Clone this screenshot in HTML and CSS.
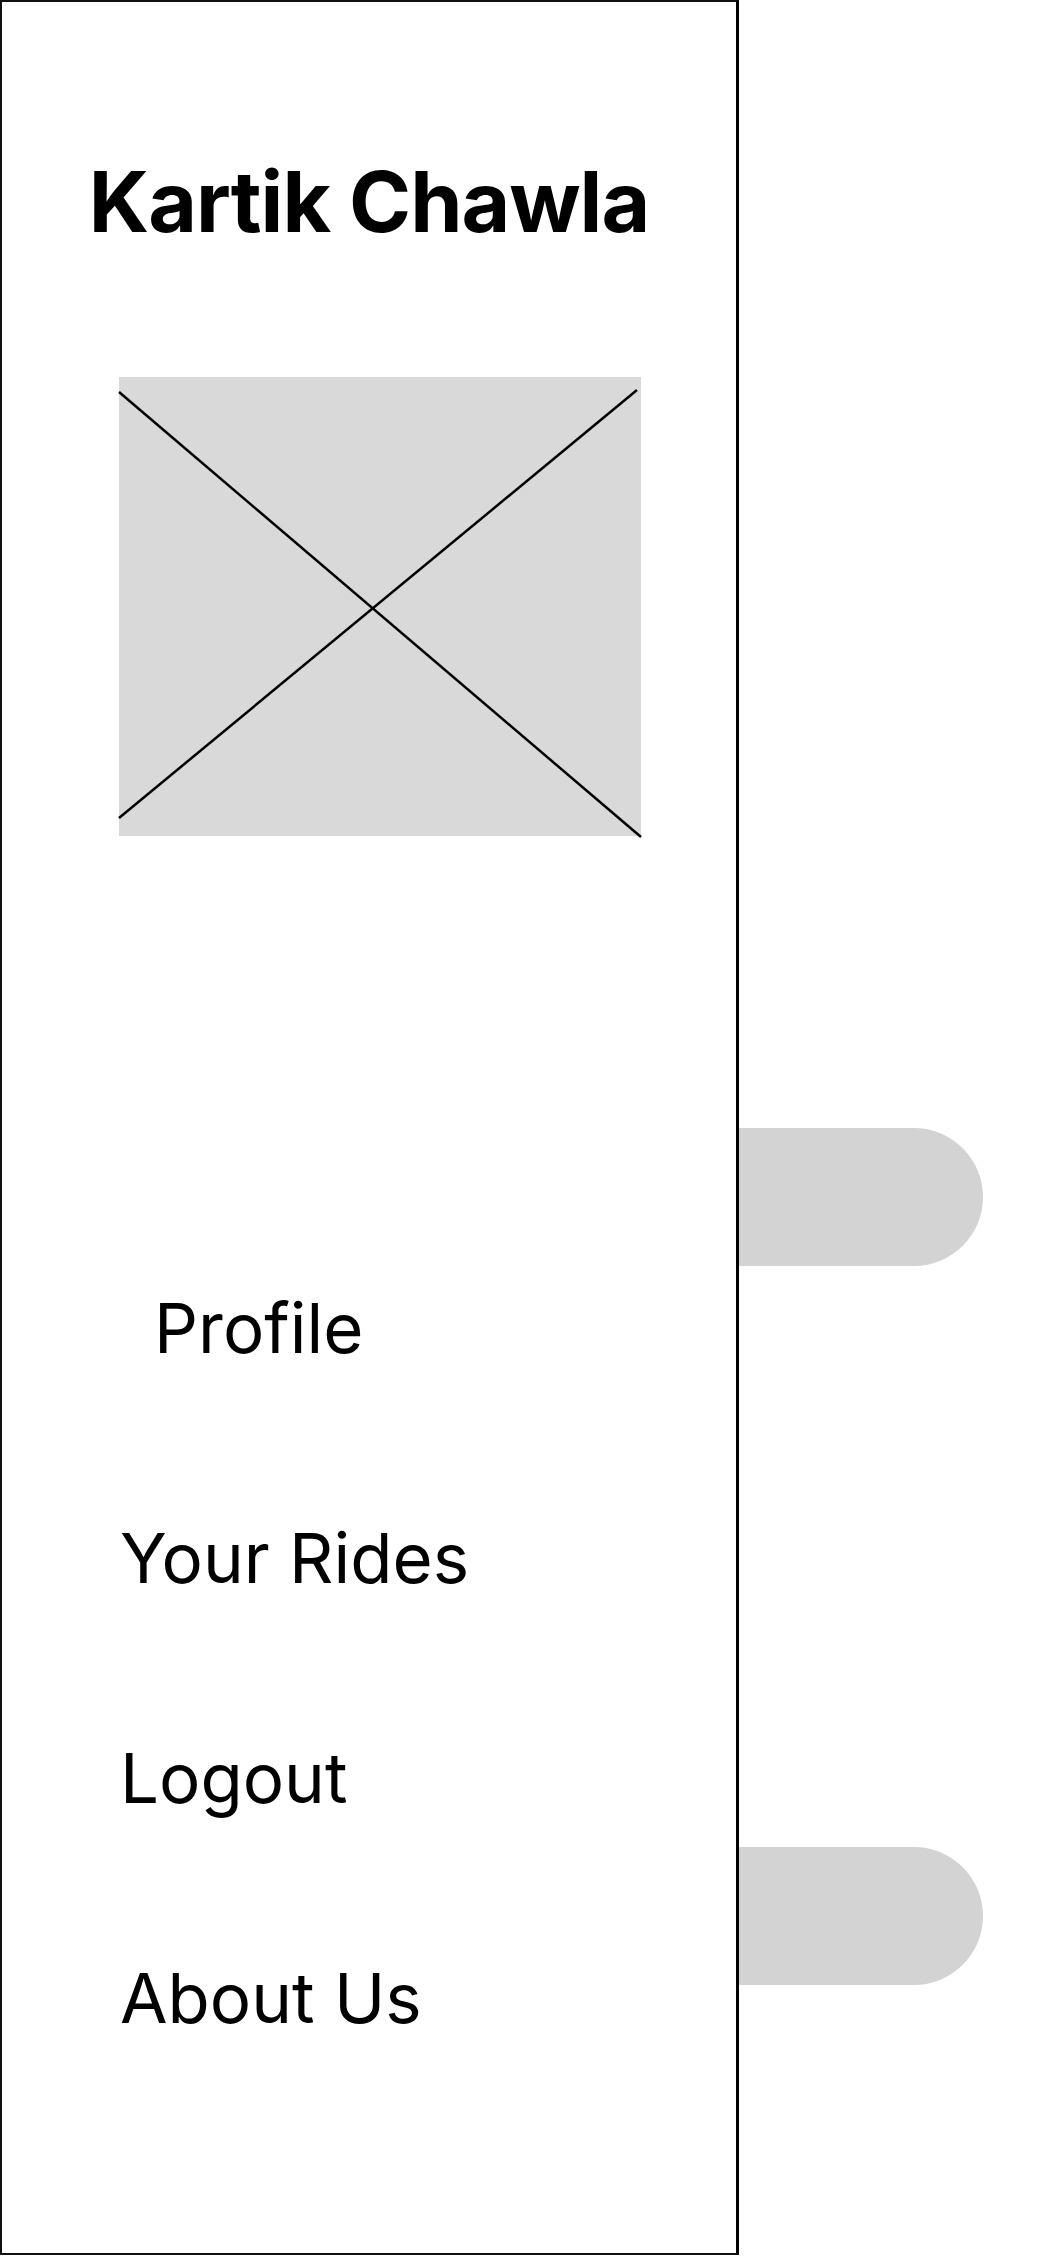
FILE: index.html
```html
<!DOCTYPE html>
<html lang="en">
<head>
    <meta charset="UTF-8">
    <meta name="viewport" content="width=device-width, initial-scale=1.0">
    <title>Kartik Chawla - Menu</title>
    <link rel="stylesheet" href="styles.css">
</head>
<body>
    <div class="screen">
        <aside class="drawer">
            <h1 class="user-name">Kartik Chawla</h1>
            <div class="avatar">
                <svg viewBox="0 0 522 459" preserveAspectRatio="none">
                    <line x1="0" y1="15" x2="522" y2="460" />
                    <line x1="0" y1="441" x2="518" y2="13" />
                </svg>
            </div>
            <nav class="menu">
                <a href="#" class="menu-item profile">Profile</a>
                <a href="#" class="menu-item">Your Rides</a>
                <a href="#" class="menu-item">Logout</a>
                <a href="#" class="menu-item">About Us</a>
            </nav>
        </aside>
        <div class="tabs">
            <div class="tab"></div>
            <div class="tab"></div>
        </div>
    </div>
</body>
</html>
```

FILE: styles.css
```css
body {
    font-family: Inter, "Noto Sans", sans-serif;
    margin: 0;
    background: #fff;
    color: #000;
}
.screen {
    display: flex;
    align-items: flex-start;
}
.drawer {
    box-sizing: border-box;
    width: 739px;
    height: 2255px;
    border: 2px solid #111;
    border-right: 3px solid #000;
    flex-shrink: 0;
}
.user-name {
    margin: 150px 0 0;
    font-size: 84px;
    font-weight: 700;
    line-height: 100px;
    letter-spacing: -1px;
    text-align: center;
}
.avatar {
    width: 522px;
    height: 459px;
    margin: 125px 0 0 117px;
    background-color: #d9d9d9;
}
.avatar svg {
    display: block;
    width: 100%;
    height: 100%;
    overflow: visible;
}
.avatar line {
    stroke: #000;
    stroke-width: 2.5;
}
.menu {
    display: flex;
    flex-direction: column;
    gap: 138px;
    margin: 451px 0 0 118px;
}
.menu-item {
    font-size: 69px;
    line-height: 82px;
    color: #000;
    text-decoration: none;
}
.menu-item.profile {
    padding-left: 34px;
    margin-bottom: 10px;
}
.tabs {
    display: flex;
    flex-direction: column;
    gap: 581px;
    padding-top: 1128px;
}
.tab {
    width: 244px;
    height: 138px;
    background-color: #d3d3d3;
    border-radius: 0 69px 69px 0;
}
```
